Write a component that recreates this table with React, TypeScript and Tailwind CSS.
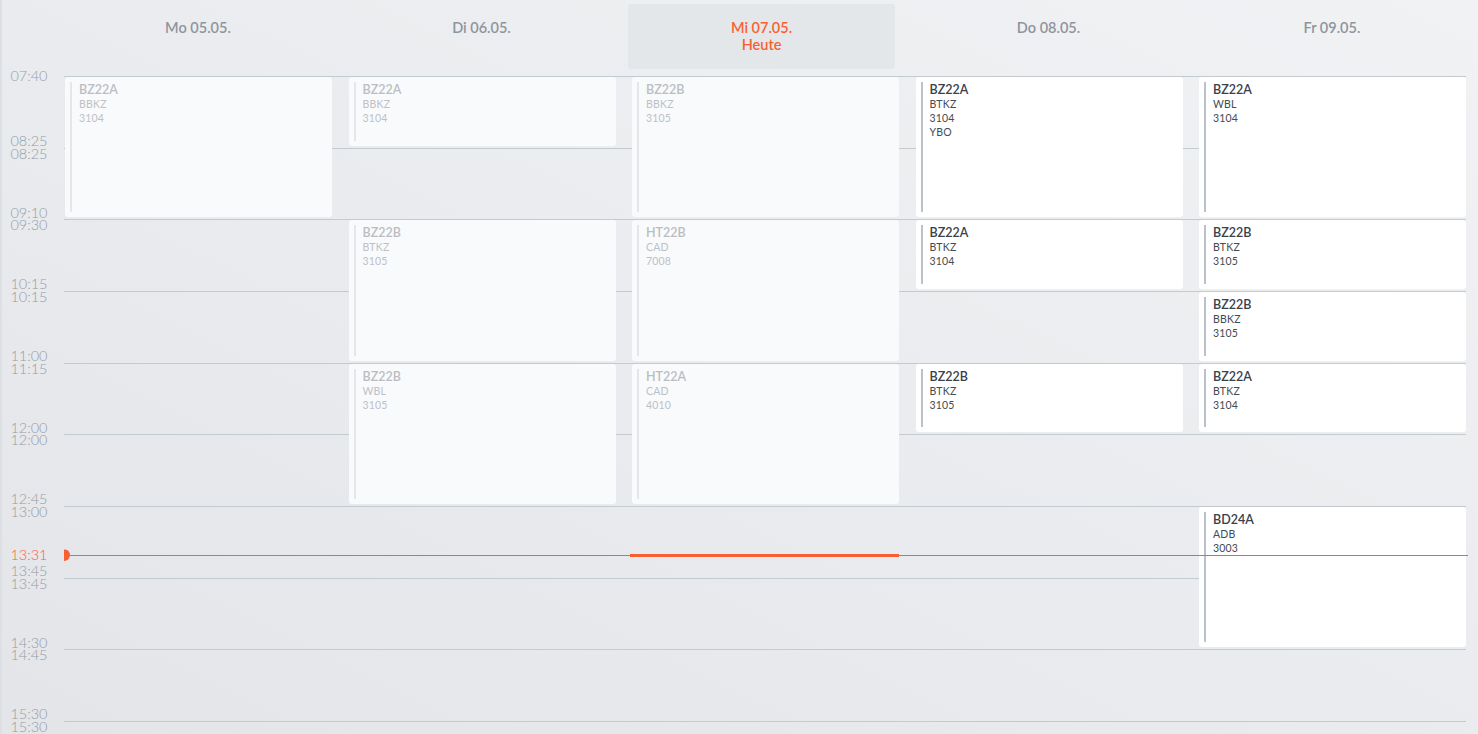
import React from 'react'

const ROW_H = 71.67
const HEADER_H = 76

const days = [
  { label: 'Mo 05.05.', past: true },
  { label: 'Di 06.05.', past: true },
  { label: 'Mi 07.05.', past: true, today: true },
  { label: 'Do 08.05.', past: false },
  { label: 'Fr 09.05.', past: false },
]

// labels sitting on each row boundary: [end of previous slot, start of next slot]
const boundaries = [
  ['07:40'],
  ['08:25', '08:25'],
  ['09:10', '09:30'],
  ['10:15', '10:15'],
  ['11:00', '11:15'],
  ['12:00', '12:00'],
  ['12:45', '13:00'],
  ['13:45', '13:45'],
  ['14:30', '14:45'],
  ['15:30', '15:30'],
]

const lessons = [
  { day: 0, row: 0, span: 2, cls: 'BZ22A', subject: 'BBKZ', room: '3104' },
  { day: 1, row: 0, span: 1, cls: 'BZ22A', subject: 'BBKZ', room: '3104' },
  { day: 1, row: 2, span: 2, cls: 'BZ22B', subject: 'BTKZ', room: '3105' },
  { day: 1, row: 4, span: 2, cls: 'BZ22B', subject: 'WBL', room: '3105' },
  { day: 2, row: 0, span: 2, cls: 'BZ22B', subject: 'BBKZ', room: '3105' },
  { day: 2, row: 2, span: 2, cls: 'HT22B', subject: 'CAD', room: '7008' },
  { day: 2, row: 4, span: 2, cls: 'HT22A', subject: 'CAD', room: '4010' },
  { day: 3, row: 0, span: 2, cls: 'BZ22A', subject: 'BTKZ', room: '3104', teacher: 'YBO' },
  { day: 3, row: 2, span: 1, cls: 'BZ22A', subject: 'BTKZ', room: '3104' },
  { day: 3, row: 4, span: 1, cls: 'BZ22B', subject: 'BTKZ', room: '3105' },
  { day: 4, row: 0, span: 2, cls: 'BZ22A', subject: 'WBL', room: '3104' },
  { day: 4, row: 2, span: 1, cls: 'BZ22B', subject: 'BTKZ', room: '3105' },
  { day: 4, row: 3, span: 1, cls: 'BZ22B', subject: 'BBKZ', room: '3105' },
  { day: 4, row: 4, span: 1, cls: 'BZ22A', subject: 'BTKZ', room: '3104' },
  { day: 4, row: 6, span: 2, cls: 'BD24A', subject: 'ADB', room: '3003' },
]

const rowStart: Record<number, string> = {
  0: 'row-start-2',
  1: 'row-start-3',
  2: 'row-start-4',
  3: 'row-start-5',
  4: 'row-start-6',
  5: 'row-start-7',
  6: 'row-start-8',
  7: 'row-start-9',
  8: 'row-start-10',
  9: 'row-start-11',
}

const rowSpan: Record<number, string> = {
  1: 'row-span-1',
  2: 'row-span-2',
}

const colStart: Record<number, string> = {
  0: 'col-start-2',
  1: 'col-start-3',
  2: 'col-start-4',
  3: 'col-start-5',
  4: 'col-start-6',
}

function Lesson({ l }: { l: (typeof lessons)[number] }) {
  const past = days[l.day].past
  return (
    <div
      className={`${colStart[l.day]} ${rowStart[l.row]} ${rowSpan[l.span]} z-10 mt-px mb-[2px] ml-px flex rounded-[3px] py-[5px] pl-[5px] ${
        past ? 'bg-[#f9fafc]' : 'bg-white'
      }`}
    >
      <div className={`w-[2px] shrink-0 ${past ? 'bg-[#e4e6e9]' : 'bg-[#b9c1c9]'}`} />
      <div className="ml-[7px] pt-px">
        <div className={`text-[12.5px] leading-[14px] font-semibold ${past ? 'text-[#babec3]' : 'text-[#39414b]'}`}>
          {l.cls}
        </div>
        <div className={`text-[10.5px] leading-[14px] tracking-[0.2px] ${past ? 'text-[#bdc1c6]' : 'text-[#434b55]'}`}>
          <div>{l.subject}</div>
          <div>{l.room}</div>
          {l.teacher && <div>{l.teacher}</div>}
        </div>
      </div>
    </div>
  )
}

export default function App() {
  // now: 13:31, inside the 13:00 - 13:45 slot (row 6)
  const nowTop = HEADER_H + 6 * ROW_H + (31 / 45) * ROW_H

  return (
    <div className="h-[734px] w-full overflow-hidden border-l-2 border-[#dcdfe3] bg-linear-to-bl from-[#f1f2f4] to-[#e3e5e9] font-['Lato','Liberation_Sans',sans-serif]">
      <div className="relative grid grid-cols-[46.5px_repeat(5,268px)] grid-rows-[76px_repeat(10,71.67px)] gap-x-[15.5px]">
        {/* day headers */}
        {days.map((d, i) =>
          d.today ? (
            <div
              key={d.label}
              className={`${colStart[i]} row-start-1 mt-[4px] mr-[4px] ml-[-3px] h-[65px] rounded-[3px] bg-[#e4e7ea] pt-[15px] text-center text-[14.5px] leading-[17px] font-semibold text-[#fa5f32]`}
            >
              <div>{d.label}</div>
              <div>Heute</div>
            </div>
          ) : (
            <div
              key={d.label}
              className={`${colStart[i]} row-start-1 pt-[19px] text-center text-[14.5px] leading-[17px] font-semibold text-[#8e959d]`}
            >
              {d.label}
            </div>
          )
        )}

        {/* time labels */}
        {boundaries.map((b, i) => (
          <div key={`t${i}`} className={`col-start-1 ${rowStart[i]} pr-[1px] text-right`}>
            <div
              className={`text-[14.5px] leading-[12.5px] font-light text-[#959ca4] ${
                b.length === 1 ? 'mt-[-6px]' : 'mt-[-12.5px]'
              }`}
            >
              {b.map((t, j) => (
                <div key={j}>{t}</div>
              ))}
            </div>
          </div>
        ))}

        {/* row lines */}
        {boundaries.map((_, i) => (
          <div key={`l${i}`} className={`col-start-2 col-span-5 ${rowStart[i]} border-t border-[#c3cad0]`} />
        ))}

        {lessons.map((l, i) => (
          <Lesson key={i} l={l} />
        ))}

        {/* current time */}
        <div className="pointer-events-none absolute inset-x-0 z-20" style={{ top: nowTop - 6 }}>
          <div className="relative h-[12px]">
            <div className="absolute top-0 left-0 w-[46.5px] pr-[1px] text-right text-[14.5px] leading-[12px] font-light text-[#fa5f32]">
              13:31
            </div>
            <div className="absolute top-0 left-[56px] h-[12px] w-[12px] [clip-path:inset(0_0_0_50%)] rounded-full bg-[#fa5f32]" />
            <div className="absolute top-[5.5px] right-[10px] left-[62px] h-px bg-[#f2643c]" />
            <div className="absolute top-[4.5px] left-[628px] h-[3px] w-[269px] bg-[#fa5f32]" />
          </div>
        </div>
      </div>
    </div>
  )
}
